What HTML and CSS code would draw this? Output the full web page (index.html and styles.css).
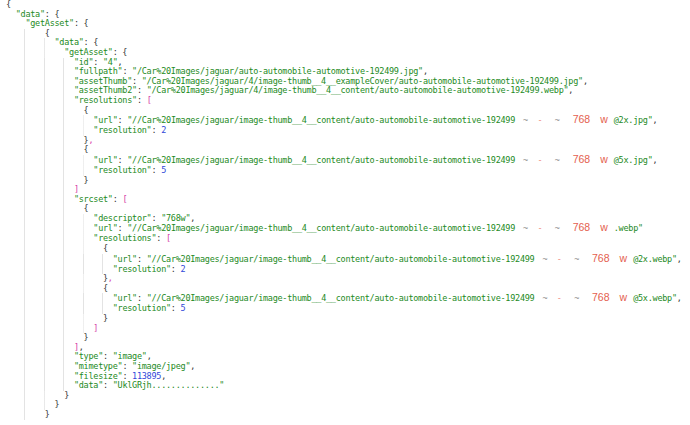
FILE: index.html
```html
<!DOCTYPE html>
<html>
<head>
<meta charset="utf-8">
<link rel="stylesheet" href="styles.css">
</head>
<body>
<div class="code">
<div class="ln i0"><span class="p">{</span></div>
<div class="ln i2"><span class="k">"data"</span><span class="p">: {</span></div>
<div class="ln i4"><span class="k">"getAsset"</span><span class="p">: {</span></div>
<div class="ln i8"><span class="p">{</span></div>
<div class="ln i10"><span class="k">"data"</span><span class="p">: {</span></div>
<div class="ln i12"><span class="k">"getAsset"</span><span class="p">: {</span></div>
<div class="ln i14"><span class="k">"id"</span><span class="p">: </span><span class="s">"4"</span><span class="p">,</span></div>
<div class="ln i14"><span class="k">"fullpath"</span><span class="p">: </span><span class="s">"/Car%20Images/jaguar/auto-automobile-automotive-192499.jpg"</span><span class="p">,</span></div>
<div class="ln i14"><span class="k">"assetThumb"</span><span class="p">: </span><span class="s">"/Car%20Images/jaguar/4/image-thumb__4__exampleCover/auto-automobile-automotive-192499.jpg"</span><span class="p">,</span></div>
<div class="ln i14"><span class="k">"assetThumb2"</span><span class="p">: </span><span class="s">"/Car%20Images/jaguar/4/image-thumb__4__content/auto-automobile-automotive-192499.webp"</span><span class="p">,</span></div>
<div class="ln i14"><span class="k">"resolutions"</span><span class="p">: </span><span class="b">[</span></div>
<div class="ln i16"><span class="p">{</span></div>
<div class="ln i18 tall"><span class="k">"url"</span><span class="p">: </span><span class="s">"//Car%20Images/jaguar/image-thumb__4__content/auto-automobile-automotive-192499</span><span class="t t1">~</span><span class="d">-</span><span class="t t2">~</span><span class="r r1">768</span><span class="r r2">w</span><span class="s s2">@2x.jpg"</span><span class="p">,</span></div>
<div class="ln i18"><span class="k">"resolution"</span><span class="p">: </span><span class="n">2</span></div>
<div class="ln i16"><span class="p">}</span><span class="b">,</span></div>
<div class="ln i16"><span class="p">{</span></div>
<div class="ln i18 tall"><span class="k">"url"</span><span class="p">: </span><span class="s">"//Car%20Images/jaguar/image-thumb__4__content/auto-automobile-automotive-192499</span><span class="t t1">~</span><span class="d">-</span><span class="t t2">~</span><span class="r r1">768</span><span class="r r2">w</span><span class="s s2">@5x.jpg"</span><span class="p">,</span></div>
<div class="ln i18"><span class="k">"resolution"</span><span class="p">: </span><span class="n">5</span></div>
<div class="ln i16"><span class="p">}</span></div>
<div class="ln i14"><span class="b">]</span></div>
<div class="ln i14"><span class="k">"srcset"</span><span class="p">: </span><span class="b">[</span></div>
<div class="ln i16"><span class="p">{</span></div>
<div class="ln i18"><span class="k">"descriptor"</span><span class="p">: </span><span class="s">"768w"</span><span class="p">,</span></div>
<div class="ln i18 tall"><span class="k">"url"</span><span class="p">: </span><span class="s">"//Car%20Images/jaguar/image-thumb__4__content/auto-automobile-automotive-192499</span><span class="t t1">~</span><span class="d">-</span><span class="t t2">~</span><span class="r r1">768</span><span class="r r2">w</span><span class="s s2">.webp"</span></div>
<div class="ln i18"><span class="k">"resolutions"</span><span class="p">: </span><span class="b">[</span></div>
<div class="ln i20"><span class="p">{</span></div>
<div class="ln i22 tall"><span class="k">"url"</span><span class="p">: </span><span class="s">"//Car%20Images/jaguar/image-thumb__4__content/auto-automobile-automotive-192499</span><span class="t t1">~</span><span class="d">-</span><span class="t t2">~</span><span class="r r1">768</span><span class="r r2">w</span><span class="s s2">@2x.webp"</span><span class="p">,</span></div>
<div class="ln i22"><span class="k">"resolution"</span><span class="p">: </span><span class="n">2</span></div>
<div class="ln i20"><span class="p">}</span><span class="b">,</span></div>
<div class="ln i20"><span class="p">{</span></div>
<div class="ln i22 tall"><span class="k">"url"</span><span class="p">: </span><span class="s">"//Car%20Images/jaguar/image-thumb__4__content/auto-automobile-automotive-192499</span><span class="t t1">~</span><span class="d">-</span><span class="t t2">~</span><span class="r r1">768</span><span class="r r2">w</span><span class="s s2">@5x.webp"</span><span class="p">,</span></div>
<div class="ln i22"><span class="k">"resolution"</span><span class="p">: </span><span class="n">5</span></div>
<div class="ln i20"><span class="p">}</span></div>
<div class="ln i18"><span class="b">]</span></div>
<div class="ln i16"><span class="p">}</span></div>
<div class="ln i14"><span class="b">]</span><span class="p">,</span></div>
<div class="ln i14"><span class="k">"type"</span><span class="p">: </span><span class="s">"image"</span><span class="p">,</span></div>
<div class="ln i14"><span class="k">"mimetype"</span><span class="p">: </span><span class="s">"image/jpeg"</span><span class="p">,</span></div>
<div class="ln i14"><span class="k">"filesize"</span><span class="p">: </span><span class="n">113895</span><span class="p">,</span></div>
<div class="ln i14"><span class="k">"data"</span><span class="p">: </span><span class="s">"UklGRjh.............."</span></div>
<div class="ln i12"><span class="p">}</span></div>
<div class="ln i10"><span class="p">}</span></div>
<div class="ln i8"><span class="p">}</span></div>
</div>
</body>
</html>
```

FILE: styles.css
```css
html, body {
  margin: 0;
  padding: 0;
  background: #ffffff;
  overflow: hidden;
}

.code {
  padding: 0 0 0 6px;
  font-family: "DejaVu Sans Mono", "Liberation Mono", monospace;
  font-size: 8.5px;
  letter-spacing: -0.27px;
  color: #333333;
}

.ln {
  --c: 0;
  --g: 0;
  height: 9.6px;
  line-height: 9.6px;
  white-space: pre;
  padding-left: calc(var(--c) * 4.85px);
  background-image: repeating-linear-gradient(90deg, transparent 0 18.4px, #e3e3e3 18.4px 19.4px);
  background-size: calc(var(--g) * 19.4px) 100%;
  background-repeat: no-repeat;
  background-position: 0 0;
}

.ln.tall {
  height: 11px;
  line-height: 11px;
}

.i0 { --c: 0; --g: 0; }
.i2 { --c: 2; --g: 0; }
.i4 { --c: 4; --g: 0; }
.i8 { --c: 8; --g: 1; }
.i10 { --c: 10; --g: 2; }
.i12 { --c: 12; --g: 2; }
.i14 { --c: 14; --g: 3; }
.i16 { --c: 16; --g: 3; }
.i18 { --c: 18; --g: 4; }
.i20 { --c: 20; --g: 4; }
.i22 { --c: 22; --g: 5; }

.k, .s { color: #1d8a1d; }
.p { color: #333333; }
.n { color: #2f47d9; }
.b { color: #d63da8; }

.t {
  color: #8a8a8a;
}
.t1 { margin-left: 8px; }
.d {
  color: #f08a7e;
  margin-left: 9.5px;
}
.t2 { margin-left: 12.5px; }

.r {
  color: #e4604e;
  font-family: "Liberation Sans", Arial, sans-serif;
  font-size: 10.5px;
  letter-spacing: 0;
  line-height: 0;
}
.r1 { margin-left: 13px; }
.r2 { margin-left: 10px; }
.s2 { margin-left: 6px; }
```
